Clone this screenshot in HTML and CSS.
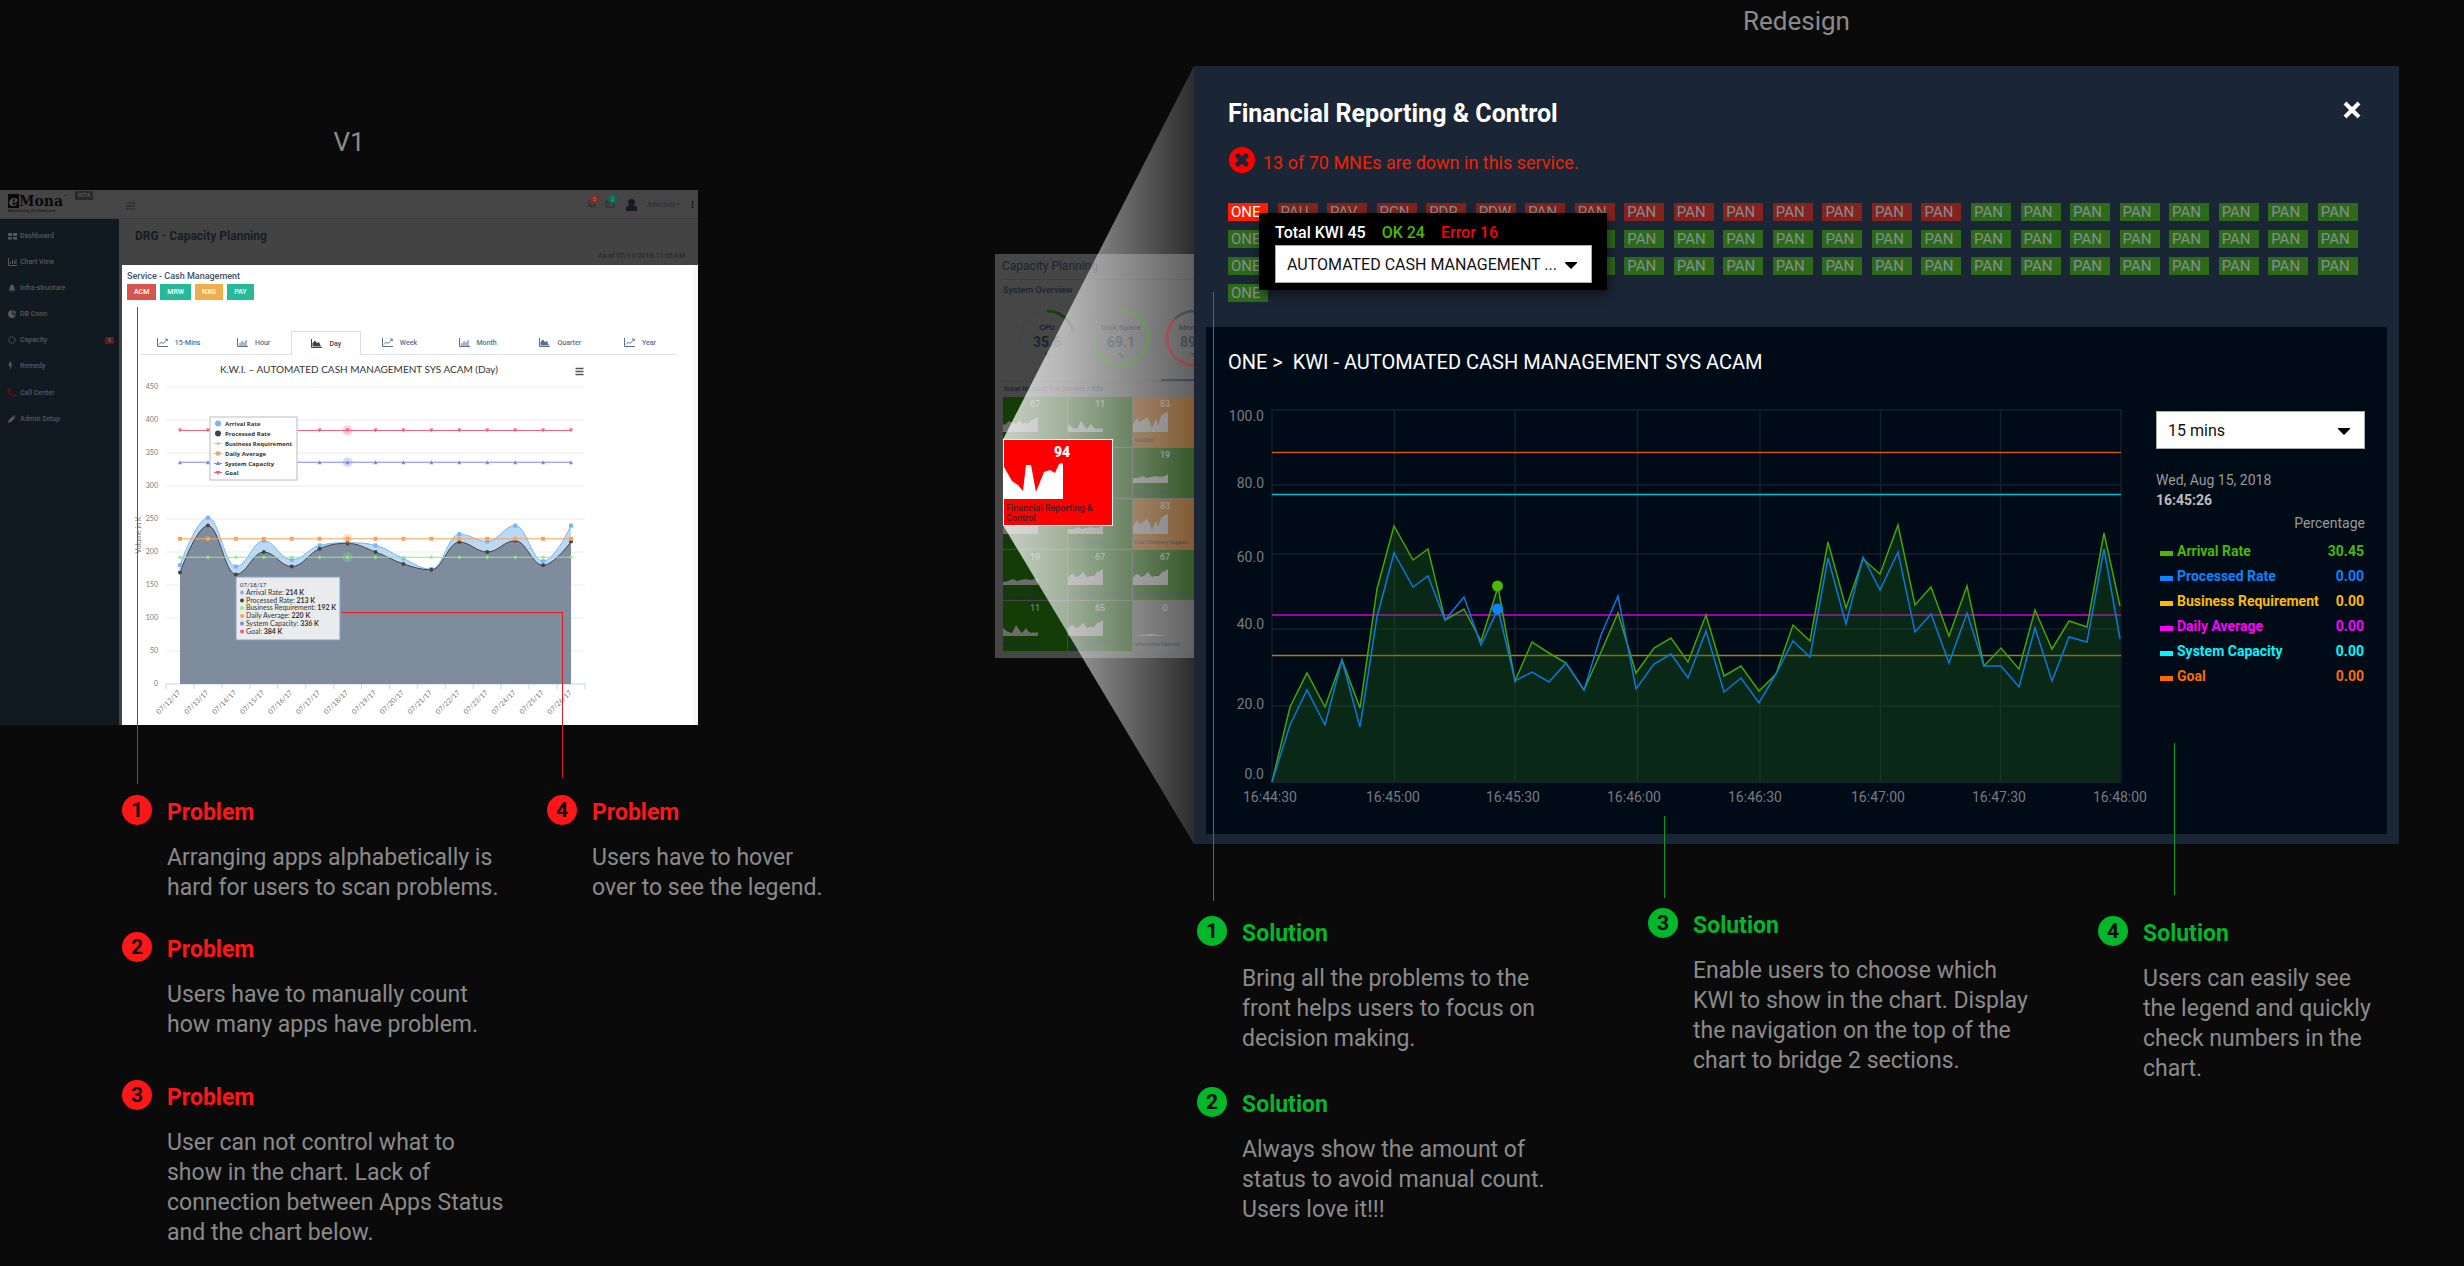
FILE: index.html
```html
<!DOCTYPE html>
<html lang="en">
<head>
<meta charset="utf-8">
<title>Capacity Planning: V1 and Redesign</title>
<link rel="stylesheet" href="styles.css">
</head>
<body>
<main class="compare">
  <section class="before">
    <div class="before-stage">
      <h2 class="version">V1</h2>
      <div class="mock">
        <header class="mock-top">
          <div class="logo"><div class="logo-name"><span class="logo-e">e</span>Mona<sup>™</sup></div><div class="logo-tag">Monitoring Architecture</div></div>
          <span class="beta">BETA</span>
          <svg class="burger" viewBox="0 0 9 8"><path d="M0 1h9M0 4h9M0 7h9" stroke="#1d2836" stroke-width="1"/></svg>
          <div class="mock-user">
            <svg width="112" height="20" viewBox="585 193 112 20">
              <path d="M588 206c2-1 2-3 2-5 0-3 4-3 4 0 0 2 0 4 2 5zM591 207h2" fill="none" stroke="#222c36"/>
              <path d="M606 201h8v6h-8zM606 201l4 3 4-3" fill="none" stroke="#222c36"/>
              <circle cx="594.500" cy="199" r="4.500" fill="#8a2b20"/><circle cx="612.500" cy="199" r="4.500" fill="#0f6a55"/>
              <text x="594.500" y="201" class="pip">5</text><text x="612.500" y="201" class="pip">2</text>
              <path d="M626 211v-2c0-3 2-3 3.500-4-3-3-1-6 2-6s5 3 2 6c1.500 1 3.500 1 3.500 4v2z" fill="#131a22"/>
              <text x="646" y="207" class="user">John Doe</text>
              <path d="M676 203l2 2 2-2" fill="none" stroke="#222c36" stroke-width=".7"/>
              <path d="M692 201h1v1.500h-1zM692 203.500h1v1.500h-1zM692 206h1v1.500h-1z" fill="#141c28" stroke="#141c28" stroke-width=".7"/>
            </svg>
          </div>
        </header>
        <div class="mock-body">
          <nav class="side">
            <a href="#"><svg viewBox="0 0 9 8"><path d="M0 1h4v3H0zM5 1h4v3H5zM0 5h4v2.500H0zM5 5h4v2.500H5z"/></svg>Dashboard</a>
            <a href="#"><svg viewBox="0 0 9 8"><path d="M0 0h1v7h8v1H0zM2 4h1v2H2zM4 2h1v4H4zM6 3h1v3H6zM7.500 1h1v5h-1z"/></svg>Chart View</a>
            <a href="#"><svg viewBox="0 0 9 8"><path d="M.5 6.500C2 5 1.500 4 2 2.500 2.500 1 3.500 1 4 0c.5 1 1.500 1 2 2.500.5 1.500 0 2.500 1.500 4zM3 7h2L4 8z"/></svg>Infra-structure</a>
            <a href="#"><svg viewBox="0 0 9 8"><path d="M4 0a4 4 0 1 0 3 6.500L4 4zM5 0a4 4 0 0 1 3 3.500H5zM5 4.500h3L7.500 6z"/></svg>DB Conn</a>
            <a href="#"><svg viewBox="0 0 9 8"><circle cx="4" cy="4" r="3.200" fill="none" stroke="#54595d" stroke-width="1.200" stroke-dasharray="1.300 1.200"/></svg>Capacity<span class="side-count">5</span></a>
            <a href="#"><svg viewBox="0 0 9 8"><path d="M1.500 0h2L3 2.500h1.500L1.500 8 2 4H.5z"/></svg>Remedy</a>
            <a href="#" class="call"><svg viewBox="0 0 9 8"><path d="M1-1l1.500 1v2l-1 1c.5 1.500 2 3 4 3l1-1 2 .5v2c-4 .8-9-1-9-7z" fill="#5a0f14"/></svg>Call Center</a>
            <a href="#"><svg viewBox="0 0 9 8"><path d="M0 8l.7-3L5 1l2 2-4.300 4.300zM5.500.5C6.500-.5 8 1 7.500 2.300z"/></svg>Admin Setup</a>
          </nav>
          <div class="mock-main">
            <div class="mock-head"><h3>DRG - Capacity Planning</h3><p>As of 07/11/2018 11:35 AM</p></div>
            <div class="card">
              <h4>Service - Cash Management</h4>
              <div class="apps"><button class="bad">ACM</button><button class="good">MRW</button><button class="warn">NXG</button><button class="good">PAY</button></div>
              <div class="tabs">
                <button><svg viewBox="0 0 11 9"><path d="M.5 0v8.500H11M2 6.500L4.500 4 6 5.500l4-4M8 1h2.200v2.200" fill="none" stroke="#58708c"/></svg>15-Mins</button>
                <button><svg viewBox="0 0 11 9"><path d="M.5 0v8.500H11M3 8V5M5 8V3M7 8V4M9 8V2" fill="none" stroke="#58708c"/></svg>Hour</button>
                <button class="on"><svg viewBox="0 0 11 9"><path d="M.5 0v8.500H11" fill="none" stroke="#444"/><path d="M1.500 7.500V4L4 1.500l2 2.500 2-1 2 4.500z" fill="#444"/></svg>Day</button>
                <button><svg viewBox="0 0 11 9"><path d="M.5 0v8.500H11M2 6.500L4.500 4 6 5.500l4-4M8 1h2.200v2.200" fill="none" stroke="#58708c"/></svg>Week</button>
                <button><svg viewBox="0 0 11 9"><path d="M.5 0v8.500H11M3 8V5M5 8V3M7 8V4M9 8V2" fill="none" stroke="#58708c"/></svg>Month</button>
                <button><svg viewBox="0 0 11 9"><path d="M.5 0v8.500H11" fill="none" stroke="#58708c"/><path d="M1.500 7.500V4L4 1.500l2 2.500 2-1 2 4.500z" fill="#58708c"/></svg>Quarter</button>
                <button><svg viewBox="0 0 11 9"><path d="M.5 0v8.500H11M2 6.500L4.500 4 6 5.500l4-4M8 1h2.200v2.200" fill="none" stroke="#58708c"/></svg>Year</button>
              </div>
              <svg class="kwi" viewBox="122 355 571 370">
                <text x="359" y="373" class="kwi-title">K.W.I. – AUTOMATED CASH MANAGEMENT SYS ACAM (Day)</text>
                <path d="M575.500 368.500h8M575.500 371.500h8M575.500 374.500h8" stroke="#555" stroke-width="1.600"/>
                <g id="kwi-plot"></g>
                <text class="axis" transform="translate(141 535) rotate(-90)" text-anchor="middle">Volume in K</text>
                <g class="kwi-legend">
                  <rect x="210" y="417" width="87" height="63" fill="#fff" stroke="#bbb"/>
                  <circle cx="218" cy="423.500" r="3" fill="#7cb5ec"/><circle cx="218" cy="433.500" r="3" fill="#434348"/>
                  <path d="M214 443.500h8" stroke="#90ed7d"/><path d="M218 441.500l2 2-2 2-2-2z" fill="#90ed7d"/>
                  <path d="M214 453.500h8" stroke="#f7a35c"/><path d="M216 451.500h4v4h-4z" fill="#f7a35c"/>
                  <path d="M214 463.500h8" stroke="#8085e9"/><path d="M218 461l2.500 4h-5z" fill="#8085e9"/>
                  <path d="M214 472.500h8" stroke="#f15c80"/><path d="M218 475l2.500-4h-5z" fill="#f15c80"/>
                  <text x="225" y="426">Arrival Rate</text><text x="225" y="436">Processed Rate</text><text x="225" y="446">Business Requirement</text>
                  <text x="225" y="456">Daily Average</text><text x="225" y="466">System Capacity</text><text x="225" y="475">Goal</text>
                </g>
                <g class="kwi-tip">
                  <rect x="236" y="577" width="104" height="63" fill="#f2f2f2" fill-opacity=".93" stroke="#7ea3c9"/>
                  <text x="240" y="587" class="tip-date">07/18/17</text>
                  <circle cx="242" cy="592.500" r="2" fill="#7cb5ec"/><text x="246" y="595">Arrival Rate: <tspan>214 K</tspan></text>
                  <circle cx="242" cy="600.500" r="2" fill="#434348"/><text x="246" y="603">Processed Rate: <tspan>213 K</tspan></text>
                  <circle cx="242" cy="608" r="2" fill="#90ed7d"/><text x="246" y="610">Business Requirement: <tspan>192 K</tspan></text>
                  <circle cx="242" cy="616" r="2" fill="#f7a35c"/><text x="246" y="618">Daily Average: <tspan>220 K</tspan></text>
                  <circle cx="242" cy="623.500" r="2" fill="#8085e9"/><text x="246" y="626">System Capacity: <tspan>336 K</tspan></text>
                  <circle cx="242" cy="631.500" r="2" fill="#f15c80"/><text x="246" y="634">Goal: <tspan>384 K</tspan></text>
                </g>
              </svg>
            </div>
          </div>
        </div>
      </div>
    </div>
    <div class="notes notes-before">
      <div>
        <article class="note problem"><i class="lead lead-p1"></i><b class="num">1</b><h3>Problem</h3><p>Arranging apps alphabetically is<br>hard for users to scan problems.</p></article>
        <article class="note problem"><b class="num">2</b><h3>Problem</h3><p>Users have to manually count<br>how many apps have problem.</p></article>
        <article class="note problem roomy"><b class="num">3</b><h3>Problem</h3><p>User can not control what to<br>show in the chart. Lack of<br>connection between Apps Status<br>and the chart below.</p></article>
      </div>
      <div>
        <article class="note problem"><i class="lead lead-p4"></i><b class="num">4</b><h3>Problem</h3><p>Users have to hover<br>over to see the legend.</p></article>
      </div>
    </div>
  </section>

  <section class="after">
    <div class="after-stage">
      <h2 class="version version-after">Redesign</h2>
      <div class="source">
        <div class="preview">
          <h3>Capacity Planning</h3>
          <h4>System Overview</h4>
          <svg class="gauges" width="220" height="84" viewBox="995 297 220 84">
            <g fill="none" stroke="#3e3e3e" stroke-width="1" stroke-dasharray="1 7"><circle cx="1047" cy="338" r="32"/><circle cx="1121" cy="338" r="32"/><circle cx="1194" cy="338" r="32"/></g>
            <g fill="none" stroke-width="2.500">
              <circle cx="1047" cy="338" r="27" stroke="#444"/>
              <path d="M1047 311a27 27 0 0 1 26 20" stroke="#143f08"/>
              <path d="M1121 311a27 27 0 1 1-26 20" stroke="#1f6a06"/>
              <path d="M1194 311a27 27 0 1 1-19 8" stroke="#8a1a1a"/>
              <path d="M1175 319a27 27 0 0 1 19-8" stroke="#1b2838"/>
            </g>
            <g class="gauge-text">
              <text x="1047" y="330">CPU</text><text x="1047" y="347" class="big">35.6</text><text x="1047" y="358">%</text>
              <text x="1121" y="330">Disk Space</text><text x="1121" y="347" class="big">69.1</text><text x="1121" y="358">%</text>
              <text x="1194" y="330">Memory</text><text x="1194" y="347" class="big">89.0</text><text x="1194" y="358">%</text>
            </g>
            <path d="M1161 380h54" stroke="#18222e" stroke-width="2"/>
          </svg>
          <h5>Issue Number Per Service / 30s</h5>
          <div class="tiles">
            <div class="tile"><b>67</b><svg viewBox="0 0 35 16"><path d="M0 16V8l2 1 4-4 4 2 3 1 4-4 2 4 2-1 4 1 2-3 5-3 3-1v15z"/></svg></div>
            <div class="tile"><b>11</b><svg viewBox="0 0 35 16"><path d="M0 16V8l5 4 4 1 4-8 4 6 2 2 4-5 3 4 3 1 2-1 1 1 3-1v4z"/></svg></div>
            <div class="tile orange"><b>83</b><svg viewBox="0 0 35 20"><path d="M0 20v-8l4-6 3 4 7-5 2 3 3 8 4-9 2 6 3-9 4-3 3-1v20z"/></svg><span>NetX360</span></div>
            <div class="tile"></div>
            <div class="tile"></div>
            <div class="tile"><b>19</b><svg viewBox="0 0 35 16"><path d="M0 16v-5l5 0 5-2 4 2 4-1 5-1 4 1 5-1 3-2v9z"/></svg><span>Financial Advice</span></div>
            <div class="tile"><svg viewBox="0 0 35 16"><path d="M0 16V9l6-3 5 3 6-4 5 3 6-5 7-2v15z"/></svg><span>Corporate Actions</span></div>
            <div class="tile"><svg viewBox="0 0 35 16"><path d="M0 16v-5l5 0 5-2 4 2 4-1 5-1 4 1 5-1 3-2v9z"/></svg><span>Custody Services</span></div>
            <div class="tile orange"><b>83</b><svg viewBox="0 0 35 20"><path d="M0 20v-8l4-6 3 4 7-5 2 3 3 8 4-9 2 6 3-9 4-3 3-1v20z"/></svg><span>Trust Company Support</span></div>
            <div class="tile"><b>19</b><svg viewBox="0 0 35 16"><path d="M0 16v-3l5-1 5-2 4 2 4-1 5-1 4 1 5-1 3-1v7z"/></svg><span>Positions &amp; Balances Management/Accounting</span></div>
            <div class="tile"><b>67</b><svg viewBox="0 0 35 16"><path d="M0 16V9l2-3 3-1 3 3 3-1 4-4 4 5 3-1 4 0 3-4 3-1 3-2v16z"/></svg><span>Performance Reporting</span></div>
            <div class="tile"><b>67</b><svg viewBox="0 0 35 16"><path d="M0 16V9l2-3 3-1 3 3 3-1 4-4 4 5 3-1 4 0 3-4 3-1 3-2v16z"/></svg><span>Reconciliation &amp; Control</span></div>
            <div class="tile"><b>11</b><svg viewBox="0 0 35 16"><path d="M0 16V8l5 4 4 1 4-8 4 6 2 2 4-5 3 4 3 1 2-1 1 1 3-1v4z"/></svg><span>Trade Processing</span></div>
            <div class="tile"><b>65</b><svg viewBox="0 0 35 16"><path d="M0 16V9l2-3 3-1 3 3 3-1 4-4 4 5 3-1 4 0 3-4 3-1 3-2v16z"/></svg><span>Business Process Management</span></div>
            <div class="tile grey"><b>0</b><svg viewBox="0 0 35 16"><path d="M0 16l18-2 17 2z"/></svg><span>Information Delivery</span></div>
          </div>
        </div>
        <div class="beam"></div>
        <div class="alert-tile"><b>94</b><svg viewBox="0 0 59 38"><path d="M0 38V6l8 14 6 4 5 6 3-26 5 0 5 27 8-20 6-2 5 3 4-9 3-1 1 2v34z"/></svg><span>Financial Reporting &amp; Control</span></div>
      </div>

      <div class="modal">
        <div class="modal-head">
          <h1>Financial Reporting &amp; Control</h1>
          <button class="close" aria-label="Close"><svg viewBox="0 0 18 18" width="18" height="18"><path d="M2 2l14 14M16 2L2 16" stroke="#fff" stroke-width="4"/></svg></button>
        </div>
        <div class="status"><svg width="27" height="26" viewBox="0 0 27 26"><circle cx="14" cy="13" r="13" fill="#f00"/><path d="M10 9l8 8M18 9l-8 8" stroke="#1a2536" stroke-width="5" stroke-linecap="round"/></svg><p>13 of 70 MNEs are down in this service.</p></div>
        <div class="chips-wrap">
          <div class="chips" id="chips"></div>
          <div class="popover">
            <div class="totals"><span>Total KWI 45</span><span class="ok">OK 24</span><span class="err">Error 16</span></div>
            <label class="pick"><select aria-label="KWI"><option>AUTOMATED CASH MANAGEMENT ...</option></select><svg viewBox="0 0 12 7"><path d="M0 0h12v1L6 7 0 1z"/></svg></label>
          </div>
        </div>
        <div class="panel">
          <h2>ONE &gt;&nbsp; KWI - AUTOMATED CASH MANAGEMENT SYS ACAM</h2>
          <div class="panel-body">
            <svg class="live" viewBox="1206 377 940 457">
              <path d="M1272 410H2121V782.500H1272zM1272 485H2121M1272 554H2121M1272 629H2121M1272 706H2121M1394.500 410V782M1515 410V782M1637.500 410V782M1760 410V782M1880.500 410V782M2000.500 410V782" fill="none" stroke="#171f28" stroke-width="1.500"/>
              <path d="M1272 452.500H2121" stroke="#d65600" stroke-width="1.500"/>
              <path d="M1272 494.500H2121" stroke="#00c3cb" stroke-width="1.500"/>
              <path d="M1272 615H2121" stroke="#9c04a6" stroke-width="2"/>
              <path d="M1272 655.500H2121" stroke="#a87f08" stroke-width="1.500"/>
              <path id="arrival-area" fill="#1c6411" fill-opacity=".33"/>
              <path id="arrival-line" fill="none" stroke="#45a30a" stroke-width="1.500"/>
              <path id="processed-line" fill="none" stroke="#0a78dd" stroke-width="1.500"/>
              <circle cx="1497.500" cy="586" r="5.500" fill="#4cb800"/><circle cx="1497.500" cy="609" r="5.500" fill="#0a84ff"/>
              <g class="live-y"><text x="1264" y="421">100.0</text><text x="1264" y="488">80.0</text><text x="1264" y="562">60.0</text><text x="1264" y="629">40.0</text><text x="1264" y="709">20.0</text><text x="1264" y="779">0.0</text></g>
              <g class="live-x"><text x="1270" y="802">16:44:30</text><text x="1393" y="802">16:45:00</text><text x="1513" y="802">16:45:30</text><text x="1634" y="802">16:46:00</text><text x="1755" y="802">16:46:30</text><text x="1878" y="802">16:47:00</text><text x="1999" y="802">16:47:30</text><text x="2120" y="802">16:48:00</text></g>
            </svg>
            <div class="readout">
              <label class="pick"><select aria-label="Interval"><option>15 mins</option></select><svg viewBox="0 0 12 7"><path d="M0 0h12v1L6 7 0 1z"/></svg></label>
              <p class="date">Wed, Aug 15, 2018</p>
              <p class="time">16:45:26</p>
              <table>
                <thead><tr><th colspan="2">Percentage</th></tr></thead>
                <tbody>
                  <tr class="arrival"><td>Arrival Rate</td><td>30.45</td></tr>
                  <tr class="processed"><td>Processed Rate</td><td>0.00</td></tr>
                  <tr class="business"><td>Business Requirement</td><td>0.00</td></tr>
                  <tr class="daily"><td>Daily Average</td><td>0.00</td></tr>
                  <tr class="capacity"><td>System Capacity</td><td>0.00</td></tr>
                  <tr class="goal"><td>Goal</td><td>0.00</td></tr>
                </tbody>
              </table>
            </div>
          </div>
        </div>
      </div>
    </div>
    <div class="notes notes-after">
      <div class="lower">
        <article class="note solution"><i class="lead lead-s1"></i><b class="num">1</b><h3>Solution</h3><p>Bring all the problems to the<br>front helps users to focus on<br>decision making.</p></article>
        <article class="note solution"><b class="num">2</b><h3>Solution</h3><p>Always show the amount of<br>status to avoid manual count.<br>Users love it!!!</p></article>
      </div>
      <div>
        <article class="note solution"><i class="lead lead-s3"></i><b class="num">3</b><h3>Solution</h3><p>Enable users to choose which<br>KWI to show in the chart. Display<br>the navigation on the top of the<br>chart to bridge 2 sections.</p></article>
      </div>
      <div class="lower">
        <article class="note solution"><i class="lead lead-s4"></i><b class="num">4</b><h3>Solution</h3><p>Users can easily see<br>the legend and quickly<br>check numbers in the<br>chart.</p></article>
      </div>
    </div>
  </section>
</main>
<script src="script.js"></script>
</body>
</html>
```

FILE: styles.css
```css
* { box-sizing: border-box; }
body { margin: 0; background: #0a0a0a; color: #8b8b8b; font-family: Roboto, "Liberation Sans", sans-serif; overflow-x: hidden; }
h1, h2, h3, h4, h5, p { margin: 0; font-weight: 400; }
button { font-family: inherit; border: 0; padding: 0; cursor: pointer; }
a { color: inherit; text-decoration: none; }

.compare { display: grid; grid-template-columns: 995fr 1469fr; min-height: 100vh; }
.version { font-size: 26px; line-height: 30px; text-align: center; }

/* V1 screen */
.before { padding-top: 127px; }
.before-stage { display: grid; grid-template-columns: 698fr 297fr; row-gap: 33px; }
.before-stage > * { grid-column: 1; }
.mock { background: #434343; color: #1d2530; font-size: 7px; line-height: 10px; }
.mock-top { display: flex; height: 29px; background: #454545; border-bottom: 1px solid #3c3c3c; }
.logo { width: 67px; padding: 4px 0 0 8px; color: #0c0c0c; white-space: nowrap; }
.logo-name { display: flex; font: 700 14px/14px "DejaVu Serif", serif; color: #0a0a0a; }
.logo-e { width: 12px; text-align: center; font-style: italic; background: #0a0a0a; color: #555; }
.logo sup { font: 4px/6px "DejaVu Sans", sans-serif; }
.logo-tag { font: 4px/6px "DejaVu Sans", sans-serif; }
.beta { height: 9px; margin: 1px 0 0 8px; padding: 0 3px; background: #2a2a2a; color: #555; font-size: 5px; line-height: 9px; font-weight: 700; }
.burger { width: 9px; height: 8px; margin: 12px 0 0 33px; }
.mock-user { margin: 3px 1px 0 auto; }
.pip { font-size: 5px; fill: #999; text-anchor: middle; }
.user { font-size: 7px; fill: #222c36; }
.mock-body { display: grid; grid-template-columns: 119px 1fr; }
.side { background: #111a21; color: #54595d; padding-top: 4px; font-weight: 500; }
.side a { display: flex; align-items: center; height: 26px; padding: 0 5px 0 8px; }
.side svg { width: 9px; height: 8px; margin-right: 3px; fill: #54595d; overflow: visible; }
.side .call { margin-top: 1px; }
.side-count { margin-left: auto; width: 9px; height: 7px; background: #5c1c1c; color: #777; font-size: 5px; line-height: 7px; text-align: center; }
.mock-main { padding-left: 3px; }
.mock-head { display: flex; justify-content: space-between; height: 46px; padding: 9px 13px 0 13px; }
.mock-head h3 { font-size: 12px; line-height: 16px; font-weight: 700; color: #151c26; }
.mock-head p { padding-top: 23px; }
.card { background: #fff; border-right: 5px solid #f7f7f7; padding-top: 4px; }
.card h4 { padding-left: 5px; font-size: 9px; line-height: 15px; font-weight: 500; color: #41506a; }
.apps { display: flex; gap: 4px; padding-left: 5px; }
.apps button { height: 16px; padding: 0 7px; color: #fff; font-size: 7px; font-weight: 500; }
.bad { background: #d9534f; }
.good { background: #26b99a; }
.warn { background: #f0ad4e; }
.tabs { display: grid; grid-template-columns: 75fr 75fr 70fr 76fr 80fr 85fr 74fr; padding: 31px 16px 0 19px; }
.tabs button { display: flex; align-items: center; justify-content: center; gap: 7px; height: 24px; background: none; border-bottom: 1px solid #e2e4e6; font-size: 7px; font-weight: 500; color: #58708c; }
.tabs .on { border: 1px solid #ddd; border-bottom: 0; color: #444; }
.tabs svg { width: 11px; height: 9px; }
.kwi { display: block; width: 100%; height: auto; font-family: Lato, sans-serif; }
.kwi-title { font-size: 10px; fill: #333; text-anchor: middle; }
.axis { font-size: 7px; fill: #777; }
.kwi-legend text { font: 700 6px "Open Sans", sans-serif; fill: #333; }
.kwi-tip text { font-size: 7px; fill: #333; }
.kwi-tip .tip-date { font-size: 6px; }
.kwi-tip tspan { font-weight: 700; }

/* numbered notes */
.notes { display: grid; }
.notes-before { grid-template-columns: 425fr 448fr; padding: 70px 0 0 122px; }
.notes-after { grid-template-columns: 451fr 450fr 366fr; padding: 64px 0 0 202px; }
.lower { padding-top: 8px; }
.note { position: relative; display: grid; grid-template-columns: 30px 1fr; column-gap: 15px; font-size: 23px; line-height: 30px; white-space: nowrap; }
.note + .note { margin-top: 29px; }
.notes-after .note + .note { margin-top: 33px; }
.note + .roomy { margin-top: 40px; }
.note h3 { padding-top: 3px; font-size: 23px; font-weight: 700; }
.note p { grid-column: 2; padding-top: 15px; }
.num { height: 30px; border-radius: 50%; color: #0a0a0a; font-size: 21px; line-height: 30px; text-align: center; }
.problem h3 { color: #ff1616; }
.problem .num { background: #ff1616; }
.solution h3 { color: #00b828; }
.solution .num { background: #00b828; }
.lead { position: absolute; z-index: 3; border: 0 solid #e01d1d; }
.solution .lead { border-color: #00a024; }
.lead-p1 { left: 15px; bottom: calc(100% + 11px); height: 477px; border-left-width: 1px; }
.lead-p4 { left: -205px; bottom: calc(100% + 17px); width: 221px; height: 166px; border-width: 1px 1px 0 0; }
.lead-s1 { left: 16px; bottom: calc(100% + 15px); height: 609px; border-left-width: 1px; }
.lead-s3 { left: 16px; bottom: calc(100% + 10px); height: 82px; border-left-width: 1px; }
.lead-s4 { left: 76px; bottom: calc(100% + 21px); height: 152px; border-left-width: 1px; }

/* redesign */
.after-stage { display: grid; grid-template-columns: 199fr 1205fr 65fr; grid-template-rows: 66px auto; }
.version-after { grid-column: 2; padding-top: 6px; }
.source { grid-column: 1; grid-row: 2; position: relative; padding-top: 188px; overflow: hidden; }
.preview { height: 404px; padding-left: 7px; background: #464646; color: #1a2430; overflow: hidden; white-space: nowrap; }
.preview h3 { font-size: 12px; line-height: 25px; border-bottom: 1px solid #3e3e3e; }
.preview h4 { padding: 4px 0 0 1px; font-size: 9px; line-height: 13px; font-weight: 500; }
.gauges { display: block; margin-left: -7px; }
.gauge-text text { font-size: 8px; font-weight: 700; fill: #1a2430; text-anchor: middle; }
.gauge-text .big { font-size: 14px; }
.preview h5 { padding-left: 2px; border-top: 1px solid #3e3e3e; font-size: 7px; line-height: 15px; font-weight: 500; }
.tiles { display: grid; grid-template-columns: repeat(3, 64px); grid-auto-rows: 50px; gap: 1px; width: 195px; margin-left: 1px; }
.tile { position: relative; padding-top: 2px; background: #143c06; text-align: center; white-space: normal; }
.tile b { display: block; font-size: 9px; line-height: 11px; color: #777; font-weight: 500; }
.tile svg { position: absolute; left: 0; bottom: 15px; width: 35px; fill: #6c6c6c; }
.tile span { position: absolute; left: 1px; top: 40px; font-size: 5px; line-height: 6px; font-weight: 700; text-align: left; white-space: nowrap; color: #1a2c30; }
.tile:nth-child(10) span, .tile:nth-child(14) span { top: 37px; white-space: normal; }
.orange { background: #6b3f12; }
.grey { background: #484848; }
.beam { position: absolute; inset: 0; background: linear-gradient(90deg, rgba(255, 255, 255, .78), rgba(255, 255, 255, .6) 35%, rgba(255, 255, 255, .14)); clip-path: polygon(100% 0, 4% 48%, 4% 59%, 100% 100%); }
.alert-tile { position: absolute; left: 8px; top: 373px; width: 110px; height: 87px; padding: 3px 0 0 1px; border: 1px solid #fff; background: #f00; color: #5a1c26; font-size: 9px; line-height: 10px; font-weight: 700; }
.alert-tile b { display: block; padding-left: 49px; color: #fff; font-size: 14px; line-height: 18px; }
.alert-tile svg { display: block; width: 59px; margin-left: -1px; fill: #fff; }
.alert-tile span { display: block; padding: 4px 0 0 1px; }

.modal { grid-column: 2; grid-row: 2; padding: 32px 12px 10px; background: #1a2536; }
.modal-head { display: flex; justify-content: space-between; padding: 0 26px 0 22px; }
.modal h1 { font-size: 25px; line-height: 32px; font-weight: 700; color: #fff; }
.close { display: flex; width: 18px; height: 18px; margin-top: 3px; background: none; }
.status { display: flex; gap: 8px; margin: 17px 22px 0; color: #f22200; }
.status p { font-size: 18px; line-height: 32px; }
.chips-wrap { position: relative; margin: 24px 29px 25px 22px; }
.chips { display: grid; grid-template-columns: repeat(23, 40px); justify-content: space-between; grid-auto-rows: 18px; row-gap: 9px; }
.chips button { background: #2c6a1a; color: #868d90; font-size: 15px; line-height: 18px; text-align: left; padding-left: 3px; }
.chips .down { background: #84221d; }
.chips .active { background: #ff1e00; color: #fff; }
.popover { position: absolute; left: 31px; top: 10px; width: 348px; padding: 8px 15px 7px 16px; background: #000; box-shadow: 2px 4px 10px rgba(0, 0, 0, .5); }
.totals { display: flex; gap: 16px; color: #fff; font-size: 16px; line-height: 24px; font-weight: 500; }
.ok { color: #4cb800; }
.err { color: #f00; }
.pick { position: relative; display: block; }
.pick select { width: 100%; height: 38px; padding: 0 11px; appearance: none; border: 1px solid #aaa; border-radius: 0; background: #fff; color: #111; font: 16px Roboto, sans-serif; }
.pick svg { position: absolute; right: 15px; top: 17px; width: 12px; height: 7px; pointer-events: none; }

.panel { padding: 20px 22px 0 0; background: #000b18; }
.panel h2 { padding-left: 22px; font-size: 20px; line-height: 30px; color: #fff; }
.panel-body { display: grid; grid-template-columns: 1fr 209px; column-gap: 10px; }
.live { display: block; width: 100%; height: auto; overflow: visible; font-size: 14px; }
.live-y { fill: #777c80; text-anchor: end; }
.live-x { fill: #777c80; text-anchor: middle; }
.readout { padding-top: 34px; font-size: 14px; line-height: 20px; color: #9a9a9a; }
.date { padding-top: 21px; }
.time { font-weight: 700; color: #bdbdbd; }
.readout table { width: 100%; border-collapse: collapse; }
.readout th { padding: 3px 0 5px; font-weight: 400; text-align: right; }
.readout td { height: 25px; padding: 0 1px 0 0; font-weight: 700; }
.readout td:last-child { text-align: right; }
.readout td:first-child::before { content: ""; display: inline-block; width: 13px; height: 5px; margin: 0 4px 0 4px; background: currentColor; }
.arrival { color: #4cb800; }
.processed { color: #0a84ff; }
.business { color: #ffba00; }
.daily { color: #f0f; }
.capacity { color: #00f6ff; }
.goal { color: #ff6a00; }
```

FILE: script.js
```js
// Application chips: the failing ones come first.
const names = ["ONE", "PAU", "PAV", "PCN", "PDR", "PDW"];
const perRow = 23;
const chips = document.getElementById("chips");
for (let i = 0; i < 70; i++) {
  const chip = document.createElement("button");
  chip.textContent = i % perRow === 0 ? "ONE" : names[i] || "PAN";
  if (i === 0) chip.className = "active";
  else if (i < 15) chip.className = "down";
  chips.append(chip);
}

// Live chart: x, arrival y, processed y.
const live = [
  [1272, 782, 782], [1290, 707, 725], [1307, 673, 690], [1325, 707, 725], [1342, 660, 660], [1360, 708, 727],
  [1377, 589, 617], [1394, 526, 553], [1413, 560, 587], [1428, 549, 576], [1445, 620, 620], [1464, 609, 597],
  [1481, 641, 645], [1498, 587, 609], [1515, 681, 681], [1532, 642, 672], [1549, 653, 682], [1566, 663, 663],
  [1584, 690, 690], [1601, 652, 635], [1618, 613, 596], [1636, 673, 689], [1654, 648, 664], [1671, 638, 654],
  [1688, 662, 678], [1706, 615, 631], [1724, 676, 692], [1741, 666, 678], [1759, 691, 703], [1776, 674, 674],
  [1793, 625, 641], [1810, 641, 657], [1828, 542, 558], [1846, 608, 624], [1863, 559, 557], [1880, 574, 590],
  [1898, 525, 552], [1915, 605, 632], [1931, 587, 614], [1949, 636, 663], [1967, 586, 613], [1984, 666, 666],
  [2001, 648, 666], [2019, 669, 687], [2035, 610, 628], [2052, 649, 681], [2069, 621, 637], [2087, 627, 642],
  [2104, 533, 549], [2120, 606, 639]
];
const line = (k) => "M" + live.map((p) => p[0] + " " + p[k]).join("L");
document.getElementById("arrival-line").setAttribute("d", line(1));
document.getElementById("processed-line").setAttribute("d", line(2));
document.getElementById("arrival-area").setAttribute("d", line(1) + "V782H1272Z");

// V1 daily chart.
const arrival = [180, 252, 178, 217, 188, 210, 214, 210, 190, 174, 227, 216, 240, 186, 240];
const processed = [169, 240, 166, 200, 178, 205, 213, 200, 182, 173, 215, 200, 217, 180, 216];
const px = (i) => 180 + i * 27.93;
const py = (v) => 684 - v * 0.66;

function spline(values) {
  const pts = values.map((v, i) => [px(i), py(v)]);
  const left = [], right = [];
  pts.forEach(([x, y], i) => {
    const a = pts[i - 1], b = pts[i + 1];
    if (!a || !b) { left[i] = right[i] = [x, y]; return; }
    const lx = (1.5 * x + a[0]) / 2.5, rx = (1.5 * x + b[0]) / 2.5;
    let ly = (1.5 * y + a[1]) / 2.5, ry = (1.5 * y + b[1]) / 2.5;
    const fix = ((ry - ly) * (rx - x)) / (rx - lx) + y - ry;
    ly += fix; ry += fix;
    if (ly > a[1] && ly > y) { ly = Math.max(a[1], y); ry = 2 * y - ly; }
    else if (ly < a[1] && ly < y) { ly = Math.min(a[1], y); ry = 2 * y - ly; }
    if (ry > b[1] && ry > y) { ry = Math.max(b[1], y); ly = 2 * y - ry; }
    else if (ry < b[1] && ry < y) { ry = Math.min(b[1], y); ly = 2 * y - ry; }
    left[i] = [lx, ly]; right[i] = [rx, ry];
  });
  return pts.map((p, i) => i ? `C${right[i - 1]} ${left[i]} ${p}` : `M${p}`).join("");
}

let out = "";
for (let v = 0; v <= 450; v += 50) {
  out += `<path d="M166 ${py(v)}H585" stroke="${v ? "#ececec" : "#c6d4e6"}"/>`;
  out += `<text class="axis" x="158" y="${py(v) + 2}" text-anchor="end">${v}</text>`;
}
for (let i = 0; i <= 15; i++) out += `<path d="M${166 + i * 27.93} 684v5" stroke="#c6d4e6"/>`;
for (let i = 0; i < 15; i++) {
  out += `<text class="axis" text-anchor="end" transform="translate(${px(i) + 1} 693) rotate(-45)">07/${12 + i}/17</text>`;
}
const area = `L${px(14)} 684L${px(0)} 684Z`;
out += `<path d="${spline(arrival)}${area}" fill="#bcd9f4"/><path d="${spline(arrival)}" fill="none" stroke="#7cb5ec"/>`;
out += `<path d="${spline(processed)}${area}" fill="#7f8c9e"/><path d="${spline(processed)}" fill="none" stroke="#434348"/>`;
const square = (x, y, c) => `<rect x="${x - 2}" y="${y - 2}" width="4" height="4" fill="${c}"/>`;
arrival.forEach((v, i) => { out += square(px(i), py(v), "#7cb5ec"); });
processed.forEach((v, i) => { out += `<circle cx="${px(i)}" cy="${py(v)}" r="2" fill="#434348"/>`; });
const levels = [
  [384, "#f15c80", (x, y) => `M${x} ${y + 2}l2-4h-4z`],
  [336, "#8085e9", (x, y) => `M${x} ${y - 2}l2 4h-4z`],
  [220, "#f7a35c", (x, y) => `M${x - 2} ${y - 2}h4v4h-4z`],
  [192, "#90ed7d", (x, y) => `M${x} ${y - 2}l2 2-2 2-2-2z`]
];
levels.forEach(([v, color, mark]) => {
  out += `<path d="M${px(0)} ${py(v)}H${px(14)}" stroke="${color}"/>`;
  out += `<circle cx="${px(6)}" cy="${py(v)}" r="5" fill="${color}" fill-opacity=".3"/>`;
  for (let i = 0; i < 15; i++) out += `<path d="${mark(px(i), py(v))}" fill="${color}"/>`;
});
document.getElementById("kwi-plot").innerHTML = out;
```
